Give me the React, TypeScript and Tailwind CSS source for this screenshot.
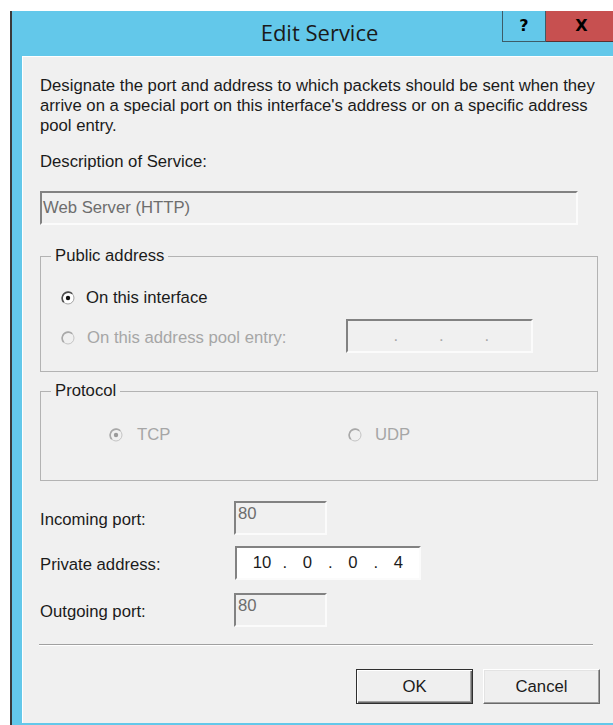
import React from 'react';

// classic sunken 3D edge used by the edit fields
const sunken =
  'border-2 border-t-[#828282] border-l-[#828282] border-r-[#fbfbfb] border-b-[#fbfbfb]';

function Radio({ checked = false, disabled = false }: { checked?: boolean; disabled?: boolean }) {
  const ring = disabled ? '#c4c4c4' : '#a3a3a3';
  const shade = disabled ? '#a9a9a9' : '#4d4d4d';
  const fill = disabled ? '#f0f0f0' : '#ffffff';
  const dot = disabled ? '#9a9a9a' : '#111111';
  return (
    <svg width="14" height="14" viewBox="0 0 14 14" className="shrink-0">
      <circle cx="7" cy="7" r="6" fill={fill} stroke={ring} strokeWidth="1" />
      <path d="M2.76 11.24 A6 6 0 0 1 11.24 2.76" fill="none" stroke={shade} strokeWidth="1.6" />
      {checked && <circle cx="7" cy="7" r="2.2" fill={dot} />}
    </svg>
  );
}

function IpBox({ parts, width, disabled = false }: { parts: string[]; width: string; disabled?: boolean }) {
  return (
    <div
      className={`${sunken} ${width} h-[34px] flex items-center pl-[8px] ${
        disabled ? 'bg-[#f0f0f0] text-[#a8a8a8]' : 'bg-white text-[#1b1b1b]'
      }`}
    >
      {parts.map((p, i) => (
        <React.Fragment key={i}>
          <span className="w-[34px] text-center">{p}</span>
          {i < parts.length - 1 && <span className="w-[11.5px] text-center">.</span>}
        </React.Fragment>
      ))}
    </div>
  );
}

function PortBox({ value }: { value: string }) {
  return (
    <div className={`${sunken} w-[93px] h-[34px] bg-[#f0f0f0] pl-[2px] pt-[1px] text-[#6d6d6d]`}>
      {value}
    </div>
  );
}

export default function App() {
  return (
    <div className="w-[613px] h-[725px] overflow-hidden bg-white pt-[11px] pl-[10px] font-['Liberation_Sans',Arial,sans-serif] text-[16.7px] leading-[20px] text-[#1b1b1b]">
      <div className="flex h-full flex-col border-l-2 border-[#3a3a3a] bg-[#63c8ea]">
        {/* title bar */}
        <div className="flex h-[45px] shrink-0 items-start">
          <div className="w-[490px] shrink-0 pl-[125px] pt-[6px] text-center font-['Open_Sans',sans-serif] text-[22px] leading-[30px] text-[#1a1a1a]">
            Edit Service
          </div>
          <div className="flex h-[31px] w-[44px] shrink-0 items-center justify-center border-b border-l border-r border-[#3d5c68] font-['DejaVu_Sans',sans-serif] text-[16px] font-bold text-black">
            ?
          </div>
          <div className="flex h-[31px] w-[71px] shrink-0 items-center justify-center border-b border-[#5a3030] bg-[#c75050] font-['DejaVu_Sans',sans-serif] text-[16px] font-bold text-black">
            X
          </div>
        </div>

        {/* dialog body */}
        <div className="mb-[2px] ml-[10px] flex-1 border-l border-t border-white bg-[#f0f0f0] pl-[17px] pr-[15px] pt-[19px]">
          <p>
            Designate the port and address to which packets should be sent when they
            <br />
            arrive on a special port on this interface's address or on a specific address
            <br />
            pool entry.
          </p>

          <div className="mt-[16px]">Description of Service:</div>
          <div className={`${sunken} mt-[19px] flex h-[34px] w-[538px] items-center bg-[#f0f0f0] pl-[1px] pb-[1px] text-[#6d6d6d]`}>
            Web Server (HTTP)
          </div>

          <fieldset className="mt-[21px] border border-[#b3b3b3] pb-[18px]">
            <legend className="ml-[10px] px-[4px]">Public address</legend>
            <div className="mt-[22px] flex items-center pl-[20px]">
              <Radio checked />
              <span className="ml-[11px]">On this interface</span>
            </div>
            <div className="mt-[11px] flex items-center pl-[20px]">
              <div className="flex w-[285px] items-center pt-[3px]">
                <Radio disabled />
                <span className="ml-[12px] text-[#a6a6a6]">On this address pool entry:</span>
              </div>
              <IpBox parts={['', '', '', '']} width="w-[187px]" disabled />
            </div>
          </fieldset>

          <fieldset className="mt-[9px] border border-[#b3b3b3] pb-[35px]">
            <legend className="ml-[10px] px-[4px]">Protocol</legend>
            <div className="mt-[24px] flex items-center pl-[68px] text-[#a6a6a6]">
              <div className="flex w-[239px] items-center">
                <Radio checked disabled />
                <span className="ml-[14px]">TCP</span>
              </div>
              <Radio disabled />
              <span className="ml-[13px]">UDP</span>
            </div>
          </fieldset>

          <div className="mt-[20px] flex h-[34px] items-center">
            <div className="w-[194px] pt-[3px]">Incoming port:</div>
            <PortBox value="80" />
          </div>
          <div className="mt-[11px] flex h-[34px] items-center">
            <div className="w-[195px] pt-[3px]">Private address:</div>
            <IpBox parts={['10', '0', '0', '4']} width="w-[186px]" />
          </div>
          <div className="mt-[13px] flex h-[34px] items-center">
            <div className="w-[194px] pt-[3px]">Outgoing port:</div>
            <PortBox value="80" />
          </div>

          <div className="mt-[17px] -ml-[1px] mr-[5px] border-b border-t border-b-white border-t-[#a0a0a0]" />

          <div className="-mr-[2px] mt-[23px] flex justify-end gap-[10px]">
            <button className="h-[35px] w-[117px] border border-[#2f2f2f] bg-[#efefef] text-[#1b1b1b] shadow-[inset_1px_1px_0_#ffffff,inset_-1px_-1px_0_#6a6a6a,inset_-2px_-2px_0_#a0a0a0]">
              OK
            </button>
            <button className="h-[35px] w-[117px] border border-b-[#6a6a6a] border-l-white border-r-[#6a6a6a] border-t-white bg-[#efefef] text-[#1b1b1b] shadow-[inset_-1px_-1px_0_#a0a0a0,inset_1px_1px_0_#e3e3e3]">
              Cancel
            </button>
          </div>
        </div>
      </div>
    </div>
  );
}
